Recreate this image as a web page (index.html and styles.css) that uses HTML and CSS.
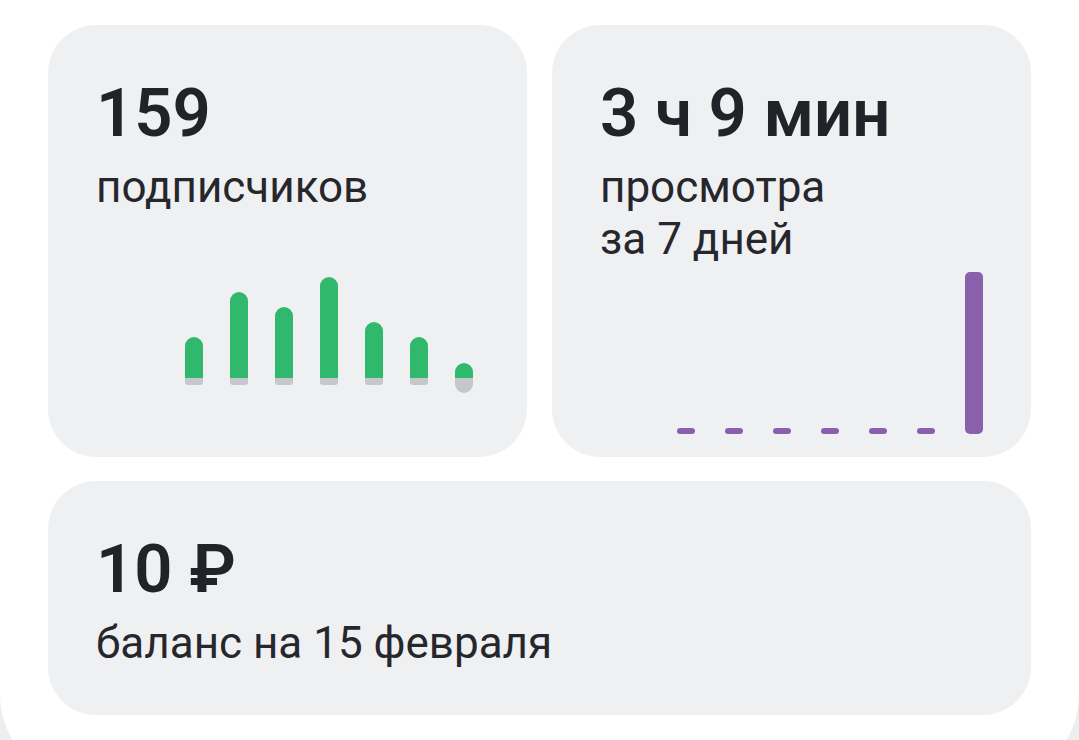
FILE: index.html
```html
<!DOCTYPE html>
<html lang="ru">
<head>
<meta charset="utf-8">
<title>Статистика</title>
<link rel="stylesheet" href="styles.css">
</head>
<body>
<div class="panel">
  <div class="grid">
    <section class="card card-subs">
      <div class="info">
        <div class="value">159</div>
        <div class="label">подписчиков</div>
      </div>
      <div class="chart chart-subs">
        <div class="bar"><div class="bar-top"><div class="fill" style="height:41px"></div></div><div class="base"></div></div>
        <div class="bar"><div class="bar-top"><div class="fill" style="height:86px"></div></div><div class="base"></div></div>
        <div class="bar"><div class="bar-top"><div class="fill" style="height:71px"></div></div><div class="base"></div></div>
        <div class="bar"><div class="bar-top"><div class="fill" style="height:101px"></div></div><div class="base"></div></div>
        <div class="bar"><div class="bar-top"><div class="fill" style="height:56px"></div></div><div class="base"></div></div>
        <div class="bar"><div class="bar-top"><div class="fill" style="height:41px"></div></div><div class="base"></div></div>
        <div class="bar"><div class="bar-top"><div class="fill" style="height:15px"></div></div><div class="base base-neg"></div></div>
      </div>
    </section>
    <section class="card card-views">
      <div class="info">
        <div class="value">3 ч 9 мин</div>
        <div class="label">просмотра<br>за 7 дней</div>
      </div>
      <div class="chart chart-views">
        <div class="vbar"></div>
        <div class="vbar"></div>
        <div class="vbar"></div>
        <div class="vbar"></div>
        <div class="vbar"></div>
        <div class="vbar"></div>
        <div class="vbar vbar-tall"></div>
      </div>
    </section>
    <section class="card card-balance">
      <div class="info">
        <div class="value">10 ₽</div>
        <div class="label">баланс на 15 февраля</div>
      </div>
    </section>
  </div>
</div>
</body>
</html>
```

FILE: styles.css
```css
html, body {
  margin: 0;
  padding: 0;
  background: #edeef0;
  overflow: hidden;
  height: 740px;
}

body {
  font-family: Roboto, "Noto Sans", "Liberation Sans", sans-serif;
  color: #222329;
}

.panel {
  background: #ffffff;
  height: 784px;
  border-radius: 0 0 90px 90px;
  box-sizing: border-box;
  padding: 25px 48px 0;
}

.grid {
  display: grid;
  grid-template-columns: 1fr 1fr;
  grid-template-rows: 432px 234px;
  column-gap: 25px;
  row-gap: 24px;
}

.card {
  background: #eff0f2;
  border-radius: 48px;
  padding: 55px 48px 0;
  display: flex;
  flex-direction: column;
  box-sizing: border-box;
}

.card-subs { padding-bottom: 64px; }
.card-views { padding-bottom: 23px; }
.card-balance { grid-column: 1 / 3; }

.value {
  font-size: 67px;
  line-height: 1;
  font-weight: 600;
  letter-spacing: 0;
}

.label {
  margin-top: 14px;
  font-size: 44px;
  line-height: 52px;
  font-weight: 400;
  color: #26272c;
}

.chart {
  margin-top: auto;
  align-self: flex-end;
  display: flex;
}

.chart-subs {
  align-items: flex-start;
  gap: 27px;
  margin-right: 6px;
}

.bar {
  width: 18px;
  display: flex;
  flex-direction: column;
}

.bar-top {
  height: 101px;
  display: flex;
  flex-direction: column;
  justify-content: flex-end;
}

.fill {
  background: #30b96c;
  border-radius: 9px 9px 0 0;
}

.base {
  height: 7px;
  background: #c6c7ca;
  border-radius: 0 0 3px 3px;
}

.base-neg {
  height: 15px;
  border-radius: 0 0 9px 9px;
}

.chart-views {
  align-items: flex-end;
  gap: 30px;
}

.vbar {
  width: 18px;
  height: 6px;
  border-radius: 3px;
  background: #8a5fab;
}

.vbar-tall {
  height: 162px;
  border-radius: 5px;
}
```
